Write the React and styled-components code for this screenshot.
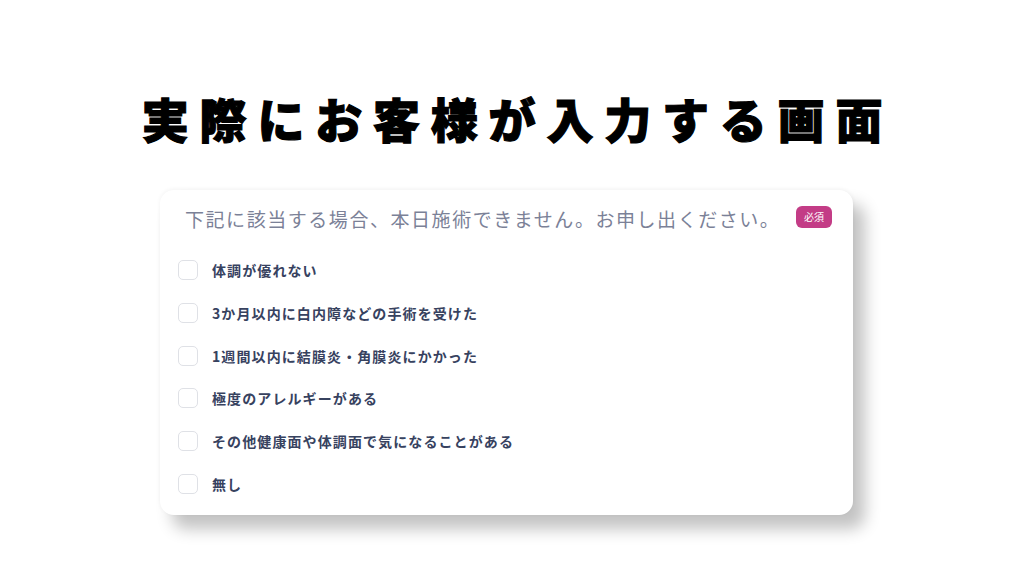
import * as React from 'react';
import styled, { createGlobalStyle } from 'styled-components';

const GlobalStyle = createGlobalStyle`
   html, body {
      margin: 0;
      padding: 0;
      background: #ffffff;
   }
   body {
      font-family: "Noto Sans CJK JP", "Noto Sans", sans-serif;
   }
`;

const Page = styled.div`
   width: 1024px;
   height: 576px;
   display: flex;
   flex-direction: column;
   align-items: center;
   box-sizing: border-box;
   padding-top: 88px;
`;

const Title = styled.h1`
   margin: 0 0 0 11px;
   font-size: 47px;
   line-height: 60px;
   font-weight: 900;
   letter-spacing: 10.8px;
   color: #000000;
   -webkit-text-stroke: 1.2px #000000;
`;

const Card = styled.section`
   margin-top: 42px;
   margin-right: 11px;
   width: 693px;
   height: 325px;
   box-sizing: border-box;
   background: #ffffff;
   border-radius: 14px;
   box-shadow: 0 -1px 4px rgba(0, 0, 0, 0.05), 12px 14px 16px rgba(0, 0, 0, 0.24);
   padding: 14px 21px 0 18px;
`;

const Header = styled.header`
   display: flex;
   align-items: flex-start;
   justify-content: space-between;
   padding-left: 7px;
`;

const Question = styled.div`
   font-size: 19px;
   line-height: 30px;
   letter-spacing: 1.55px;
   color: #7b8197;
`;

const Badge = styled.span`
   margin-top: 2px;
   padding: 0 8px;
   height: 22px;
   line-height: 22px;
   border-radius: 6px;
   background: #c33c86;
   color: #ffffff;
   font-size: 10px;
`;

const List = styled.ul`
   list-style: none;
   margin: 25px 0 0;
   padding: 0;
   display: flex;
   flex-direction: column;
   gap: 20.8px;
`;

const Row = styled.li`
   display: flex;
   align-items: center;
   gap: 14px;
   height: 22px;
`;

const Box = styled.span`
   width: 20px;
   height: 20px;
   box-sizing: border-box;
   border: 1px solid #dfe1e6;
   border-radius: 5px;
   background: #ffffff;
`;

const Label = styled.span`
   font-size: 14px;
   font-weight: 700;
   letter-spacing: 1.1px;
   color: #37425f;
`;

const options = [
   '体調が優れない',
   '3か月以内に白内障などの手術を受けた',
   '1週間以内に結膜炎・角膜炎にかかった',
   '極度のアレルギーがある',
   'その他健康面や体調面で気になることがある',
   '無し',
];

export default function App() {
   return (
      <Page>
         <GlobalStyle />
         <Title>実際にお客様が入力する画面</Title>
         <Card>
            <Header>
               <Question>下記に該当する場合、本日施術できません。お申し出ください。</Question>
               <Badge>必須</Badge>
            </Header>
            <List>
               {options.map((text) => (
                  <Row key={text}>
                     <Box />
                     <Label>{text}</Label>
                  </Row>
               ))}
            </List>
         </Card>
      </Page>
   );
}
